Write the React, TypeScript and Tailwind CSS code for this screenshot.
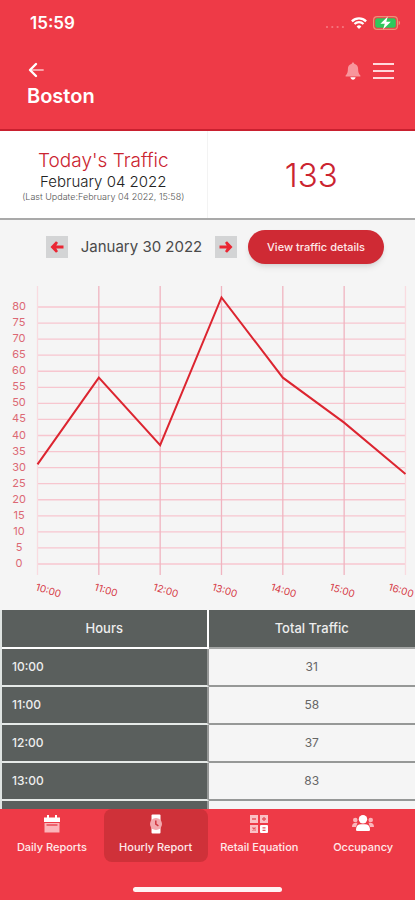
import { clsx } from "clsx";
import type { ReactNode } from "react";

const traffic = [
  { hour: "10:00", total: 31 },
  { hour: "11:00", total: 58 },
  { hour: "12:00", total: 37 },
  { hour: "13:00", total: 83 },
  { hour: "14:00", total: 58 },
  { hour: "15:00", total: 44 },
  { hour: "16:00", total: 28 },
];

const VISIBLE_ROWS = 4;

const ticks = Array.from({ length: 17 }, (_, i) => i * 5);

function StatusBar() {
  return (
    <div className="flex h-[46px] items-center justify-between pl-[30px] pr-[14px]">
      <span className="text-[17px] font-semibold leading-5">15:59</span>
      <div className="flex items-center gap-[6px]">
        <svg width="20" height="14" viewBox="0 0 20 14" aria-hidden="true">
          <g fill="#f57880">
            <circle cx="2" cy="11" r="1.1" />
            <circle cx="7.3" cy="11" r="1.1" />
            <circle cx="12.6" cy="11" r="1.1" />
            <circle cx="17.9" cy="11" r="1.1" />
          </g>
        </svg>
        <svg width="16" height="14" viewBox="0 0 16 14" fill="none" stroke="#fff" aria-hidden="true">
          <path d="M0.900 5.300A10.200 10.200 0 0 1 15.100 5.300" strokeWidth="2.400" />
          <path d="M3.500 8A6.500 6.500 0 0 1 12.500 8" strokeWidth="2.200" />
          <path d="M8 13L5.600 10.400A3.500 3.500 0 0 1 10.400 10.400Z" fill="#fff" stroke="none" />
        </svg>
        <svg width="28" height="14" viewBox="0 0 28 14" aria-hidden="true">
          <rect x="0.600" y="0.600" width="23.800" height="12.800" rx="3.500" fill="none" stroke="#ec9077" strokeWidth="1.200" />
          <rect x="2.200" y="2.200" width="20.600" height="9.600" rx="2" fill="#2fc85c" />
          <path d="M25.600 4.800v4.400c2-0.600 2-3.800 0-4.400Z" fill="#ec9077" />
          <path d="M14.800 0.400L7.400 7.800h4.400L10 13.600l7.800-7.800h-4.500Z" fill="#fff" />
        </svg>
      </div>
    </div>
  );
}

function Header() {
  return (
    <header className="h-[131px] shrink-0 border-b-2 border-[#c9202f] bg-[#ee3a47] text-white">
      <StatusBar />
      <div className="flex h-10 items-end justify-between pl-7 pr-[21px]">
        <button type="button" aria-label="Back" className="mb-2">
          <svg width="18" height="16" viewBox="0 0 18 16" fill="none" strokeLinecap="round" strokeLinejoin="round">
            <path d="M3 8h12" stroke="#f9a0a6" strokeWidth="1.800" />
            <path d="M8 2L2 8l6 6" stroke="#fff" strokeWidth="2.400" />
          </svg>
        </button>
        <div className="mb-[6px] flex items-center gap-3">
          <button type="button" aria-label="Notifications">
            <svg width="16" height="18" viewBox="0 0 16 18">
              <path d="M8 0.500c0.700 0 1.200 0.500 1.200 1.200 2.500 0.600 3.900 2.500 3.900 5.100 0 3.500 0.600 5 2.300 6.700v1H0.600v-1c1.700-1.700 2.300-3.200 2.300-6.700 0-2.600 1.400-4.500 3.900-5.100C6.800 1 7.300 0.500 8 0.500Z" fill="#f8959c" />
              <path d="M5.400 15.200h5.200c-0.300 1.600-1.300 2.500-2.600 2.500s-2.300-0.900-2.600-2.500Z" fill="#fff" />
            </svg>
          </button>
          <button type="button" aria-label="Menu">
            <svg width="21" height="18" viewBox="0 0 21 18" stroke="#ffd9dc" strokeWidth="2">
              <path d="M0 2h21M0 9h21M0 16h21" />
            </svg>
          </button>
        </div>
      </div>
      <h1 className="pl-[27px] text-[20px] font-semibold leading-5">Boston</h1>
    </header>
  );
}

function Summary() {
  return (
    <section className="grid h-[89px] grid-cols-2 border-b-2 border-[#a9a9a9] bg-white text-center">
      <div className="flex flex-col items-center border-r border-[#f3f3f3] pt-[18px]">
        <h2 className="text-[19px] font-light leading-6 text-[#cb2430]">Today's Traffic</h2>
        <p className="text-[15px] font-light leading-[18px] text-[#222222]">February 04 2022</p>
        <p className="whitespace-nowrap text-[9px] font-light leading-3 text-[#555555]">(Last Update:February 04 2022, 15:58)</p>
      </div>
      <div className="flex items-center justify-center text-[33px] font-light leading-10 text-[#cb2430]">133</div>
    </section>
  );
}

function ArrowButton({ label, flip }: { label: string; flip?: boolean }) {
  return (
    <button type="button" aria-label={label} className="flex size-[22px] items-center justify-center bg-[#d3d4d5]">
      <svg width="14" height="12" viewBox="0 0 14 12" className={clsx(flip && "-scale-x-100")}>
        <path d="M0.500 6L6 0.300l2 1.500L6.300 4.400h7.200v3.200H6.300L8 10.200l-2 1.500Z" fill="#ea2633" />
      </svg>
    </button>
  );
}

function DatePicker() {
  return (
    <div className="flex h-[54px] items-center justify-center pl-[15px]">
      <ArrowButton label="Previous day" />
      <span className="w-[147px] whitespace-nowrap text-center text-[15px] leading-5 text-[#4a4a4a]">January 30 2022</span>
      <ArrowButton label="Next day" flip />
      <button type="button" className="ml-[11px] h-[34px] w-[136px] rounded-full bg-[#cf2a34] text-[11px] font-medium text-[#ffe9ea] shadow-md">
        View traffic details
      </button>
    </div>
  );
}

function TrafficChart() {
  const x = (i: number) => 37.5 + i * 61.33;
  const y = (v: number) => 290 - v * 3.2125;
  return (
    <svg viewBox="0 0 415 336" className="block w-full" role="img" aria-label="Hourly traffic">
      <g stroke="#f7c6cf" strokeWidth="1.3">
        {ticks.map((t) => (
          <path key={t} d={`M37 ${y(t)}H405.5`} />
        ))}
      </g>
      <g strokeWidth="1.3">
        {traffic.map((p, i) => (
          <path key={p.hour} d={`M${x(i)} 12V301`} stroke={i === 0 || i === 6 ? "#f9dbe0" : "#f0b4c0"} />
        ))}
      </g>
      <g fill="#dc6874" fontSize="11" textAnchor="middle">
        {ticks.map((t) => (
          <text key={t} x="19" y={y(t) + 3}>{t}</text>
        ))}
      </g>
      <polyline
        points={traffic.map((p, i) => `${x(i)},${y(p.total)}`).join(" ")}
        fill="none"
        stroke="#dc2530"
        strokeWidth="2"
      />
      <g fill="#d63a46" fontSize="10">
        {traffic.map((p, i) => {
          const left = 35 + i * 58.8;
          return (
            <text key={p.hour} x={left} y="316" transform={`rotate(17 ${left} 316)`}>{p.hour}</text>
          );
        })}
      </g>
    </svg>
  );
}

function TrafficTable() {
  return (
    <table className="w-full table-fixed border-separate border-spacing-0 border-l-2 border-[#dfe4e2]">
      <thead>
        <tr className="h-[39px] bg-[#5a5f5d] text-[13px] text-[#eeeeee]">
          <th scope="col" className="border-b-2 border-r-2 border-white font-medium">Hours</th>
          <th scope="col" className="border-b-2 border-[#a4a6a5] font-medium">Total Traffic</th>
        </tr>
      </thead>
      <tbody>
        {traffic.slice(0, VISIBLE_ROWS).map((p) => (
          <tr key={p.hour} className="h-[38px] text-[12px]">
            <th scope="row" className="border-b-2 border-r-2 border-b-[#e6eae8] border-r-[#969897] bg-[#5a5f5d] pl-[10px] text-left font-medium text-[#eeeeee]">
              {p.hour}
            </th>
            <td className="border-b-2 border-[#969897] bg-[#f5f5f5] text-center text-[#666666]">{p.total}</td>
          </tr>
        ))}
        <tr className="h-[38px]" aria-hidden="true">
          <td className="border-r-2 border-[#969897] bg-[#5a5f5d]" />
          <td className="bg-[#f5f5f5]" />
        </tr>
      </tbody>
    </table>
  );
}

function CalendarIcon() {
  return (
    <svg width="18" height="20" viewBox="0 0 18 20">
      <path d="M1 3.500h3V1h2v2.500h6V1h2v2.500h3V8H1Z" fill="#fff" />
      <path d="M1.500 9h15v9.500h-15Z" fill="#fbb5ba" />
      <path d="M3.500 11h11" stroke="#e94a55" strokeWidth="1.500" />
    </svg>
  );
}

function WatchIcon() {
  return (
    <svg width="18" height="20" viewBox="0 0 18 20">
      <rect x="4.500" y="0.500" width="9" height="19" rx="1" fill="#fff" />
      <circle cx="9" cy="10" r="6" fill="#f3a9ae" />
      <path d="M8.800 6.500v3.700l2.600 1.600" fill="none" stroke="#cf3740" strokeWidth="1.500" />
    </svg>
  );
}

function CalculatorIcon() {
  return (
    <svg width="20" height="20" viewBox="0 0 20 20">
      <g fill="#fac0c4">
        <rect x="1" y="1" width="8" height="8" />
        <rect x="11" y="1" width="8" height="8" />
        <rect x="1" y="11" width="8" height="8" />
      </g>
      <rect x="11" y="11" width="8" height="8" rx="1" fill="#fff" />
      <path d="M3 5h4M13 5h4M15 3v4M3.500 13.500l3 3M6.500 13.500l-3 3M13.500 13.800h3M13.500 16.300h3" stroke="#e9515c" strokeWidth="1.300" />
    </svg>
  );
}

function PeopleIcon() {
  return (
    <svg width="24" height="20" viewBox="0 0 24 20">
      <g fill="#fbb5ba">
        <circle cx="4.300" cy="6" r="2.300" />
        <circle cx="19.700" cy="6" r="2.300" />
        <path d="M1 13c0-3 1.500-4.300 4-4.300h1.500L5 13ZM23 13c0-3-1.500-4.300-4-4.300h-1.500L19 13Z" />
      </g>
      <circle cx="12" cy="5.200" r="4.200" fill="#fff" />
      <path d="M5 15.500c0-3.500 2-5.200 5-5.200h4c3 0 5 1.700 5 5.200 0 1-0.600 1.500-1.500 1.500h-11C5.600 17 5 16.500 5 15.500Z" fill="#fff" />
    </svg>
  );
}

function Tab({ label, icon, active }: { label: string; icon: ReactNode; active?: boolean }) {
  return (
    <button
      type="button"
      aria-current={active ? "page" : undefined}
      className={clsx(
        "flex h-[53px] flex-col items-center gap-1 whitespace-nowrap rounded-lg pt-[5px] text-[11px] font-medium leading-[18px] text-[#ffe9ea]",
        active && "bg-[#cf3139]",
      )}
    >
      {icon}
      {label}
    </button>
  );
}

function BottomNav() {
  return (
    <footer className="flex h-[91px] shrink-0 flex-col items-center justify-between bg-[#ee3a47] pb-2">
      <nav className="grid w-full grid-cols-4">
        <Tab label="Daily Reports" icon={<CalendarIcon />} />
        <Tab label="Hourly Report" icon={<WatchIcon />} active />
        <Tab label="Retail Equation" icon={<CalculatorIcon />} />
        <Tab label="Occupancy" icon={<PeopleIcon />} />
      </nav>
      <div className="h-[5px] w-[36%] rounded-full bg-[#fff3f3]" />
    </footer>
  );
}

export default function App() {
  return (
    <div className="flex h-dvh flex-col bg-[#f5f5f5] font-['Inter','Liberation_Sans',sans-serif]">
      <Header />
      <main className="min-h-0 flex-1 overflow-hidden">
        <Summary />
        <DatePicker />
        <TrafficChart />
        <TrafficTable />
      </main>
      <BottomNav />
    </div>
  );
}
